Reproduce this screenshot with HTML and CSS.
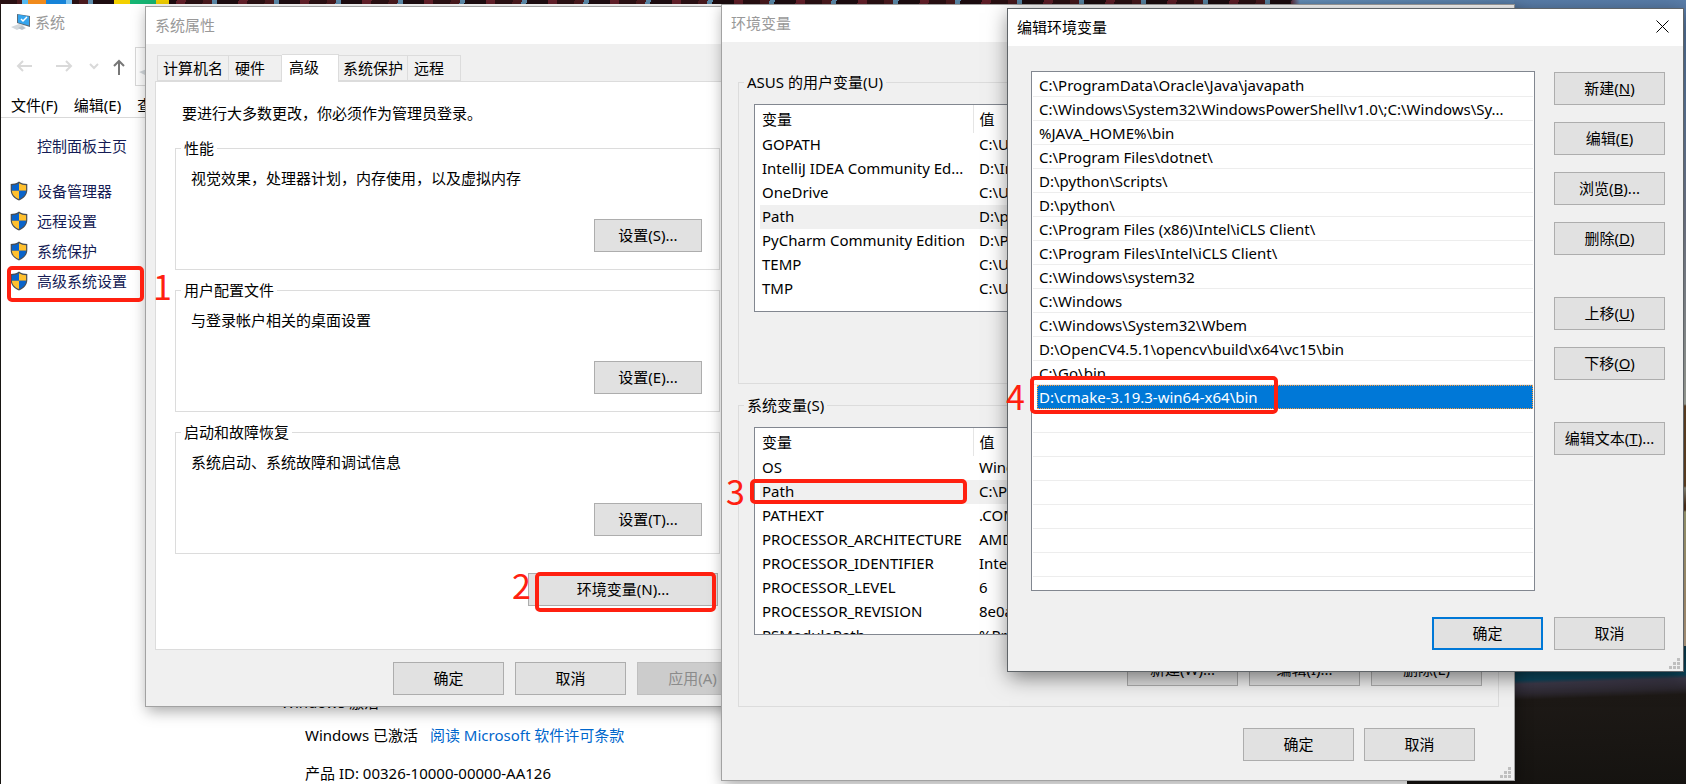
FILE: index.html
```html
<!DOCTYPE html>
<html lang="zh-CN">
<head>
<meta charset="utf-8">
<title>编辑环境变量</title>
<link rel="stylesheet" href="styles.css">
</head>
<body>
<svg class="defs" width="0" height="0" aria-hidden="true">
  <symbol id="shield" viewBox="0 0 18 20">
    <path d="M9 .6C6.500 2.400 3.500 3 .7 3v6c0 5 3.600 8.600 8.300 10.400C13.700 17.600 17.300 14 17.300 9V3C14.500 3 11.500 2.400 9 .6z" fill="#4a4f55"/>
    <path d="M9 2.200v7.600H1.900V4.200C4.500 4.100 6.900 3.500 9 2.200z" fill="#0a63c9"/>
    <path d="M9 2.200v7.600h7.100V4.200C13.500 4.100 11.100 3.500 9 2.200z" fill="#ffc02e"/>
    <path d="M9 9.800H1.900c.2 4 3.100 6.800 7.100 8.300z" fill="#ffc02e"/>
    <path d="M9 9.800h7.100c-.2 4-3.100 6.800-7.100 8.300z" fill="#0a63c9"/>
  </symbol>
  <symbol id="computer" viewBox="0 0 20 18">
    <path d="M0 14l8-3 6 2-8 4z" fill="#d3d8dc"/>
    <path d="M7 15l4-2 4 2-4 2z" fill="#b9c2c9"/>
    <path d="M6 1l13 2v11L6 10z" fill="#5b6b78"/>
    <path d="M7 1.500l11 2v9L7 9.500z" fill="#35a5ee"/>
    <path d="M10 6l2 2 4-4" fill="none" stroke="#fff" stroke-width="1.500"/>
  </symbol>
  <symbol id="grip" viewBox="0 0 12 12">
    <path d="M8 0h3v3H8zM4 4h3v3H4zM8 4h3v3H8zM0 8h3v3H0zM4 8h3v3H4zM8 8h3v3H8z" fill="#bfbfbf"/>
  </symbol>
</svg>

<div class="desktop">
  <div class="wallpaper-top"></div>
  <div class="wallpaper-side"></div>
  <div class="wallpaper-bottom"></div>

  <section class="window system">
    <header class="system-title"><svg class="computer"><use href="#computer"/></svg>系统</header>
    <nav class="toolbar">
      <svg width="124" height="20" viewBox="0 0 124 20" fill="none" stroke="#d9d9d9" stroke-width="2">
        <path d="M22 5l-5 5 5 5M17 10h14M65 5l5 5-5 5M70 10H55M89 8l4 4 4-4"/>
        <path d="M113 10l5-5 5 5M118 5v14" stroke="#777"/>
      </svg>
      <div class="address"><svg class="computer"><use href="#computer"/></svg></div>
    </nav>
    <div class="menubar"><span>文件(F)</span><span>编辑(E)</span><span>查看(V)</span></div>
    <div class="system-body">
      <aside class="sidebar">
        <a href="#" class="home">控制面板主页</a>
        <a href="#"><svg class="shield"><use href="#shield"/></svg>设备管理器</a>
        <a href="#"><svg class="shield"><use href="#shield"/></svg>远程设置</a>
        <a href="#"><svg class="shield"><use href="#shield"/></svg>系统保护</a>
        <a href="#"><svg class="shield"><use href="#shield"/></svg>高级系统设置</a>
      </aside>
      <main class="activation">
        <h2>Windows 激活</h2>
        <p>Windows 已激活<a href="#">阅读 Microsoft 软件许可条款</a></p>
        <p>产品 ID: 00326-10000-00000-AA126</p>
      </main>
    </div>
  </section>

  <section class="window dialog properties">
    <header class="title inactive">系统属性</header>
    <div class="properties-body">
      <div class="tabs" role="tablist">
        <button role="tab">计算机名</button>
        <button role="tab" class="wide">硬件</button>
        <button role="tab" class="active" aria-selected="true">高级</button>
        <button role="tab" class="tight">系统保护</button>
        <button role="tab" class="wide">远程</button>
      </div>
      <div class="page">
        <p class="notice">要进行大多数更改，你必须作为管理员登录。</p>
        <fieldset><legend>性能</legend><p>视觉效果，处理器计划，内存使用，以及虚拟内存</p><button class="btn">设置(S)...</button></fieldset>
        <fieldset><legend>用户配置文件</legend><p>与登录帐户相关的桌面设置</p><button class="btn">设置(E)...</button></fieldset>
        <fieldset><legend>启动和故障恢复</legend><p>系统启动、系统故障和调试信息</p><button class="btn">设置(T)...</button></fieldset>
        <button class="btn env">环境变量(N)...</button>
      </div>
      <div class="actions"><button class="btn">确定</button><button class="btn">取消</button><button class="btn" disabled>应用(A)</button></div>
    </div>
  </section>

  <section class="window dialog variables">
    <header class="title inactive">环境变量</header>
    <div class="variables-body">
      <fieldset>
        <legend>ASUS 的用户变量(U)</legend>
        <div class="listview">
          <table>
            <thead><tr><th class="name">变量</th><th>值</th></tr></thead>
            <tbody>
              <tr><td>GOPATH</td><td>C:\Users</td></tr>
              <tr><td>IntelliJ IDEA Community Ed...</td><td>D:\IntelliJ</td></tr>
              <tr><td>OneDrive</td><td>C:\Users</td></tr>
              <tr class="current"><td>Path</td><td>D:\python</td></tr>
              <tr><td>PyCharm Community Edition</td><td>D:\PyCharm</td></tr>
              <tr><td>TEMP</td><td>C:\Users</td></tr>
              <tr><td>TMP</td><td>C:\Users</td></tr>
            </tbody>
          </table>
        </div>
        <div class="actions"><button class="btn">新建(N)...</button><button class="btn">编辑(E)...</button><button class="btn">删除(D)</button></div>
      </fieldset>
      <fieldset>
        <legend>系统变量(S)</legend>
        <div class="listview">
          <table>
            <thead><tr><th class="name">变量</th><th>值</th></tr></thead>
            <tbody>
              <tr><td>OS</td><td>Windows_NT</td></tr>
              <tr class="current"><td>Path</td><td>C:\ProgramData</td></tr>
              <tr><td>PATHEXT</td><td>.COM;.EXE</td></tr>
              <tr><td>PROCESSOR_ARCHITECTURE</td><td>AMD64</td></tr>
              <tr><td>PROCESSOR_IDENTIFIER</td><td>Intel64</td></tr>
              <tr><td>PROCESSOR_LEVEL</td><td>6</td></tr>
              <tr><td>PROCESSOR_REVISION</td><td>8e0a</td></tr>
              <tr><td>PSModulePath</td><td>%ProgramFiles%</td></tr>
            </tbody>
          </table>
        </div>
        <div class="actions"><button class="btn">新建(W)...</button><button class="btn">编辑(I)...</button><button class="btn">删除(L)</button></div>
      </fieldset>
      <div class="actions closing"><button class="btn">确定</button><button class="btn">取消</button></div>
    </div>
    <svg class="grip"><use href="#grip"/></svg>
  </section>

  <section class="window dialog edit">
    <header class="title">编辑环境变量
      <button class="close" aria-label="关闭"><svg width="13" height="13" viewBox="0 0 13 13" stroke="#000" stroke-width="1"><path d="M.5.5l12 12M12.500.5l-12 12"/></svg></button>
    </header>
    <div class="edit-body">
      <ul class="paths">
        <li>C:\ProgramData\Oracle\Java\javapath</li>
        <li>C:\Windows\System32\WindowsPowerShell\v1.0\;C:\Windows\Sy...</li>
        <li>%JAVA_HOME%\bin</li>
        <li>C:\Program Files\dotnet\</li>
        <li>D:\python\Scripts\</li>
        <li>D:\python\</li>
        <li>C:\Program Files (x86)\Intel\iCLS Client\</li>
        <li>C:\Program Files\Intel\iCLS Client\</li>
        <li>C:\Windows\system32</li>
        <li>C:\Windows</li>
        <li>C:\Windows\System32\Wbem</li>
        <li>D:\OpenCV4.5.1\opencv\build\x64\vc15\bin</li>
        <li>C:\Go\bin</li>
        <li class="selected">D:\cmake-3.19.3-win64-x64\bin</li>
        <li></li><li></li><li></li><li></li><li></li><li></li><li></li>
      </ul>
      <div class="commands">
        <button class="btn">新建(<u>N</u>)</button>
        <button class="btn">编辑(<u>E</u>)</button>
        <button class="btn">浏览(<u>B</u>)...</button>
        <button class="btn">删除(<u>D</u>)</button>
        <button class="btn apart">上移(<u>U</u>)</button>
        <button class="btn">下移(<u>O</u>)</button>
        <button class="btn apart">编辑文本(<u>T</u>)...</button>
      </div>
    </div>
    <div class="actions edit-actions"><button class="btn default">确定</button><button class="btn">取消</button></div>
    <svg class="grip"><use href="#grip"/></svg>
  </section>

  <div class="mark mark-1"></div><span class="step step-1">1</span>
  <div class="mark mark-2"></div><span class="step step-2">2</span>
  <div class="mark mark-3"></div><span class="step step-3">3</span>
  <div class="mark mark-4"></div><span class="step step-4">4</span>
</div>
</body>
</html>
```

FILE: styles.css
```css
* { box-sizing: border-box; }

body {
  margin: 0;
  font: 15px/20px "Noto Sans", "Noto Sans CJK SC", sans-serif;
  color: #000;
}

p, h2, ul { margin: 0; padding: 0; }
h2 { font: inherit; }
a { text-decoration: none; }
button { font: inherit; color: inherit; }
.defs { position: absolute; }

.desktop {
  position: relative;
  min-height: 100vh;
  overflow: hidden;
  background: #171512;
}

.wallpaper-top {
  position: absolute;
  inset: 0 0 auto;
  height: 10px;
  background:
    linear-gradient(90deg, transparent 22px, #55b8ee 22px 28px, #f08a1c 28px 46px, #1683d8 46px 66px, #7fc4ee 66px 72px, transparent 72px 114px, #f3d000 114px 130px, #16b573 130px 156px, #f3d000 156px 169px, transparent 169px),
    linear-gradient(90deg, transparent 1290px, #6a96c2 1300px, #5479a8),
    repeating-linear-gradient(100deg, #2a1013 0 17px, #4a1a1e 17px 26px, #5d8bab 26px 31px, #1d0c10 31px 52px, #64202a 52px 61px);
}

.wallpaper-side {
  position: absolute;
  inset: 0 0 auto auto;
  width: 172px;
  height: 646px;
  background: linear-gradient(#5b80ad, #6f8fb9 100px, #8b93a8 220px, #c5cac0 404px, #77502b 406px 486px, #a9a794 488px, #5e3a1f 505px 510px, #c2c08c 512px, #cfb48c 600px, #d9bd9d 644px);
}

.wallpaper-bottom {
  position: absolute;
  inset: 646px 0 auto auto;
  width: 280px;
  height: 138px;
  background: linear-gradient(178deg, #253038 2px, #0b4258 12px, #0c4960 38px, #3f3b4c 42px, #2c2830 52px, #1d1916 58px, #151310);
}

.window { position: absolute; }

.dialog {
  background: #f0f0f0;
  border: 1px solid #a2a2a2;
  box-shadow: 2px 4px 14px rgba(0, 0, 0, .35);
}

.title {
  display: flex;
  align-items: center;
  justify-content: space-between;
  height: 37px;
  padding: 0 9px 2px;
  background: #fff;
}

.title.inactive { color: #999; }

.btn {
  height: 33px;
  width: 111px;
  padding: 0 0 2px;
  border: 1px solid #adadad;
  background: #e1e1e1;
  white-space: nowrap;
}

.btn:disabled { background: #ccc; border-color: #bfbfbf; color: #8b8b8b; }
.btn.default { border: 2px solid #0078d7; }

.actions {
  display: flex;
  justify-content: flex-end;
  gap: 11px;
}

fieldset {
  min-width: 0;
  margin: 0;
  border: 1px solid #dcdcdc;
}

legend { margin-left: -10px; padding: 0 3px; }

.grip {
  position: absolute;
  right: 2px;
  bottom: 1px;
  width: 12px;
  height: 12px;
}

/* System control panel */
.system {
  inset: 4px 279px 0 1px;
  display: flex;
  flex-direction: column;
  background: #fff;
}

.computer { width: 20px; height: 18px; flex: none; }

.system-title {
  display: flex;
  align-items: center;
  gap: 4px;
  height: 38px;
  padding: 0 0 2px 10px;
  color: #999;
}

.toolbar {
  display: flex;
  align-items: center;
  gap: 10px;
  height: 40px;
  margin-top: 4px;
}

.toolbar > svg { flex: none; overflow: visible; }

.address {
  flex: 1;
  height: 39px;
  padding: 10px 3px;
  border: 1px solid #d9d9d9;
}

.menubar {
  display: flex;
  align-items: center;
  gap: 16px;
  height: 32px;
  padding: 8px 10px 2px;
  border-bottom: 1px solid #d9d9d9;
}

.system-body { flex: 1; display: flex; }

.sidebar {
  display: flex;
  flex-direction: column;
  width: 280px;
  padding: 18px 0 0 9px;
}

.sidebar a {
  display: flex;
  align-items: center;
  gap: 9px;
  height: 30px;
  color: #151c55;
}

.sidebar .home { height: 20px; margin: 0 0 20px 27px; }
.shield { width: 18px; height: 20px; }

.activation {
  display: flex;
  flex-direction: column;
  justify-content: flex-end;
  gap: 18px;
  padding-bottom: 1px;
}

.activation h2 { line-height: 10px; }
.activation p { margin-left: 24px; }
.activation a { margin-left: 12px; color: #0066cc; }

/* System properties */
.properties { left: 145px; top: 6px; width: 615px; }
.properties-body { padding: 10px 11px 11px 9px; }

.tabs {
  position: relative;
  display: flex;
  align-items: flex-end;
  height: 28px;
  margin: 0 0 -1px 2px;
}

.tabs button {
  height: 26px;
  margin-bottom: 1px;
  padding: 0 5px;
  border: 1px solid #dcdcdc;
  border-left-width: 0;
  background: #f0f0f0;
}

.tabs button:first-child { border-left-width: 1px; }
.tabs .wide { padding: 0 16px 0 6px; }
.tabs .tight { padding: 0 4px; }

.tabs .active {
  height: 28px;
  margin: 0;
  padding: 0 19px 4px 7px;
  border-bottom: 0;
  background: #fff;
}

.page {
  display: flex;
  flex-direction: column;
  padding: 21px 27px 43px 19px;
  border: 1px solid #dcdcdc;
  background: #fff;
}

.notice { margin: 0 0 15px 7px; }

.page fieldset {
  display: flex;
  flex-direction: column;
  margin-bottom: 10px;
  padding: 10px 17px 17px 15px;
}

.page fieldset .btn { align-self: flex-end; width: 108px; margin-top: 31px; }
.page .env { align-self: flex-end; width: 190px; margin: 9px 2px 0 0; }
.properties .actions { margin-top: 12px; }

/* Environment variables */
.variables { left: 721px; top: 4px; width: 794px; }
.variables-body { padding: 30px 15px 19px 16px; }
.variables fieldset { margin-bottom: 11px; padding: 12px 16px 20px 15px; }

.listview {
  height: 208px;
  padding: 0 5px;
  overflow: hidden;
  border: 1px solid #828790;
  background: #fff;
}

.listview table {
  width: 100%;
  table-layout: fixed;
  border-collapse: collapse;
}

.listview th {
  height: 28px;
  padding: 0 0 0 6px;
  font-weight: normal;
  text-align: left;
}

.listview .name { width: 213px; padding-left: 2px; border-right: 1px solid #e5e5e5; }
.listview td { height: 24px; padding: 0 0 2px 6px; white-space: nowrap; }
.listview td:first-child { padding-left: 2px; }
.listview .current { background: #f0f0f0; }
.variables fieldset .actions { margin-top: 18px; }
.variables .closing { margin: 21px 24px 0 0; gap: 10px; }

/* Edit environment variable */
.edit {
  left: 1007px;
  top: 8px;
  width: 677px;
  border-color: #5f6468;
  box-shadow: 2px 5px 20px rgba(0, 0, 0, .5);
}

.close {
  display: flex;
  padding: 5px;
  border: 0;
  background: none;
}

.edit-body {
  display: flex;
  gap: 19px;
  padding: 25px 18px 26px 23px;
}

.paths {
  flex: 1;
  padding: 1px 1px 13px;
  border: 1px solid #828790;
  background: #fff;
  list-style: none;
}

.paths li {
  height: 24px;
  padding: 2px 0 0 6px;
  border-bottom: 1px solid #ededed;
  white-space: nowrap;
}

.paths .selected {
  margin-left: 4px;
  padding: 1px 0 0 1px;
  border: 1px dotted #ff9d3c;
  background: #0078d7;
  color: #fff;
}

.commands {
  display: flex;
  flex-direction: column;
  gap: 17px;
  padding-top: 1px;
}

.commands .apart { margin-top: 25px; }
.edit-actions { padding: 0 18px 21px; }

/* Step annotations */
.mark {
  position: absolute;
  border: 4px solid #ff2010;
  border-radius: 5px;
}

.mark-1 { left: 7px; top: 266px; width: 137px; height: 36px; }
.mark-2 { left: 535px; top: 572px; width: 181px; height: 40px; }
.mark-3 { left: 750px; top: 479px; width: 217px; height: 25px; }
.mark-4 { left: 1030px; top: 376px; width: 248px; height: 38px; }

.step {
  position: absolute;
  color: #ff2010;
  font-family: "Noto Sans CJK SC", sans-serif;
  font-size: 34px;
  line-height: 36px;
}

.step-1 { left: 153px; top: 268px; }
.step-2 { left: 512px; top: 567px; }
.step-3 { left: 726px; top: 473px; }
.step-4 { left: 1006px; top: 378px; }
```
